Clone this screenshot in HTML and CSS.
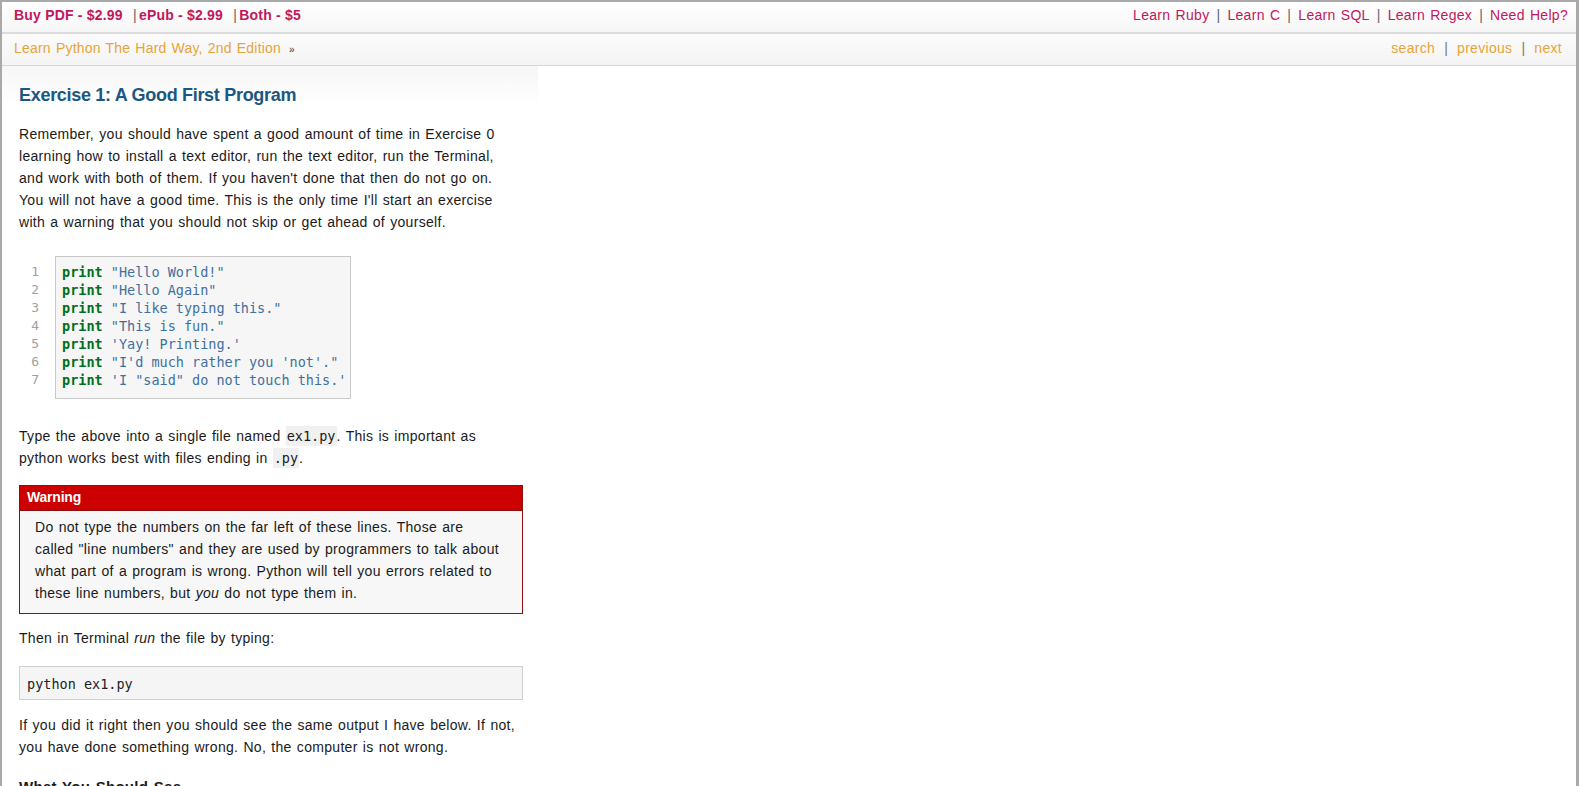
FILE: index.html
```html
<!DOCTYPE html>
<html>
<head>
<meta charset="utf-8">
<title>Exercise 1: A Good First Program</title>
<link rel="stylesheet" href="styles.css">
</head>
<body>
<div class="frame">
  <div class="topbar">
    <div class="buy">
      <a href="#">Buy PDF - $2.99</a> <span class="sep">|</span><a href="#">ePub - $2.99</a> <span class="sep">|</span><a href="#">Both - $5</a>
    </div>
    <div class="learn">
      <a href="#">Learn Ruby</a><span class="sep">|</span><a href="#">Learn C</a><span class="sep">|</span><a href="#">Learn SQL</a><span class="sep">|</span><a href="#">Learn Regex</a><span class="sep">|</span><a href="#">Need Help?</a>
    </div>
  </div>
  <div class="navbar">
    <div class="crumb"><a href="#">Learn Python The Hard Way, 2nd Edition</a><span class="raquo">»</span></div>
    <div class="navlinks"><a href="#">search</a><span class="sep">|</span><a href="#">previous</a><span class="sep">|</span><a href="#">next</a></div>
  </div>
  <div class="body">
    <div class="content">
      <h1>Exercise 1: A Good First Program</h1>
      <p>Remember, you should have spent a good amount of time in Exercise 0 learning how to install a text editor, run the text editor, run the Terminal, and work with both of them. If you haven't done that then do not go on. You will not have a good time. This is the only time I'll start an exercise with a warning that you should not skip or get ahead of yourself.</p>
      <div class="codetable">
        <pre class="linenos">1
2
3
4
5
6
7</pre>
        <pre class="code"><span class="k">print</span> <span class="s">"Hello World!"</span>
<span class="k">print</span> <span class="s">"Hello Again"</span>
<span class="k">print</span> <span class="s">"I like typing this."</span>
<span class="k">print</span> <span class="s">"This is fun."</span>
<span class="k">print</span> <span class="s">'Yay! Printing.'</span>
<span class="k">print</span> <span class="s">"I'd much rather you 'not'."</span>
<span class="k">print</span> <span class="s">'I "said" do not touch this.'</span></pre>
      </div>
      <p>Type the above into a single file named <code>ex1.py</code>. This is important as python works best with files ending in <code>.py</code>.</p>
      <div class="warning">
        <div class="warning-title">Warning</div>
        <p>Do not type the numbers on the far left of these lines. Those are called "line numbers" and they are used by programmers to talk about what part of a program is wrong. Python will tell you errors related to these line numbers, but <em>you</em> do not type them in.</p>
      </div>
      <p>Then in Terminal <em>run</em> the file by typing:</p>
      <pre class="block">python ex1.py</pre>
      <p>If you did it right then you should see the same output I have below. If not, you have done something wrong. No, the computer is not wrong.</p>
      <h2>What You Should See</h2>
    </div>
  </div>
</div>
</body>
</html>
```
FILE: styles.css
```css
html, body {
  margin: 0;
  padding: 0;
  height: 100%;
  overflow: hidden;
}
body {
  background: #ffffff;
  font-family: "Liberation Sans", Arial, sans-serif;
  font-size: 14px;
  letter-spacing: 0.3px;
  word-spacing: 1px;
  color: #1a1a1a;
}
a { text-decoration: none; }
.frame {
  height: 786px;
  box-sizing: border-box;
  border-top: 2px solid #a9a9a9;
  border-left: 2px solid #a9a9a9;
  border-right: 3px solid #a9a9a9;
  overflow: hidden;
}
.topbar {
  display: flex;
  justify-content: space-between;
  align-items: center;
  box-sizing: border-box;
  height: 32px;
  padding: 0 8px 4px 12px;
  background: linear-gradient(#ffffff, #f6f6f6);
  border-bottom: 2px solid #dcdcdc;
}
.topbar a { color: #c2185b; }
.buy a { font-weight: bold; letter-spacing: 0.2px; word-spacing: 0; }
.buy .sep { color: #666; margin: 0 2px 0 5px; }
.learn .sep { color: #666; margin: 0 7px; }
.navbar {
  display: flex;
  justify-content: space-between;
  align-items: center;
  box-sizing: border-box;
  height: 32px;
  padding: 0 14px 4px 12px;
  background: linear-gradient(#fbfbfb, #f4f4f4);
  border-bottom: 1px solid #d6d6d6;
}
.navbar a { color: #e8a438; }
.crumb a { letter-spacing: 0.2px; }
.raquo { color: #333; font-size: 10px; margin-left: 8px; }
.navlinks .sep { color: #777; margin: 0 9px; }
.body {
  background: linear-gradient(to bottom, #f6f6f6 0px, #ffffff 40px);
  background-size: 536px 40px;
  background-repeat: no-repeat;
}
.content {
  width: 504px;
  padding: 18px 0 0 17px;
}
h1 {
  margin: 0 0 17px 0;
  font-size: 18px;
  color: #1b5780;
  font-weight: bold;
  letter-spacing: -0.3px;
  word-spacing: 0;
  line-height: 22px;
}
h2 {
  margin: 20px 0 0 0;
  font-size: 15px;
  font-weight: bold;
}
p {
  margin: 0 0 16px 0;
  max-width: 500px;
  line-height: 22px;
}
.codetable {
  display: flex;
  align-items: flex-start;
  margin: 23px 0 26px 0;
}
.linenos {
  margin: 0;
  width: 20px;
  padding: 7px 0 0 0;
  text-align: right;
  color: #a0a0a0;
  font-family: "DejaVu Sans Mono", monospace;
  font-size: 13px;
  line-height: 18px;
  letter-spacing: 0;
}
.code {
  margin: 0 0 0 16px;
  padding: 6px 6px 9px 6px;
  background: #f6f6f6;
  border: 1px solid #c8c8c8;
  font-family: "DejaVu Sans Mono", monospace;
  font-size: 13.5px;
  line-height: 18px;
  letter-spacing: 0;
  word-spacing: 0;
  width: 282px;
}
.k { color: #007020; font-weight: bold; }
.s { color: #4070a0; }
code {
  font-family: "DejaVu Sans Mono", monospace;
  font-size: 13.5px;
  letter-spacing: 0;
  word-spacing: 0;
  background: #f0f0f0;
  padding: 2px 1px;
}
.warning {
  border: 1px solid #8b1010;
  background: #f7f7f7;
  margin: 0 0 13px 0;
}
.warning-title {
  background: #cc0000;
  color: #fff;
  font-weight: bold;
  padding: 0 7px;
  height: 24px;
  line-height: 22px;
  border-bottom: 1px solid #8b1010;
  letter-spacing: -0.2px;
}
.warning p {
  margin: 0;
  padding: 5px 19px 9px 15px;
}
.block {
  margin: 17px 0 14px 0;
  padding: 8px 7px 6px 7px;
  background: #f5f5f5;
  border: 1px solid #cfcfcf;
  font-family: "DejaVu Sans Mono", monospace;
  font-size: 13.5px;
  line-height: 18px;
  letter-spacing: 0;
  word-spacing: 0;
  color: #222;
}
```
